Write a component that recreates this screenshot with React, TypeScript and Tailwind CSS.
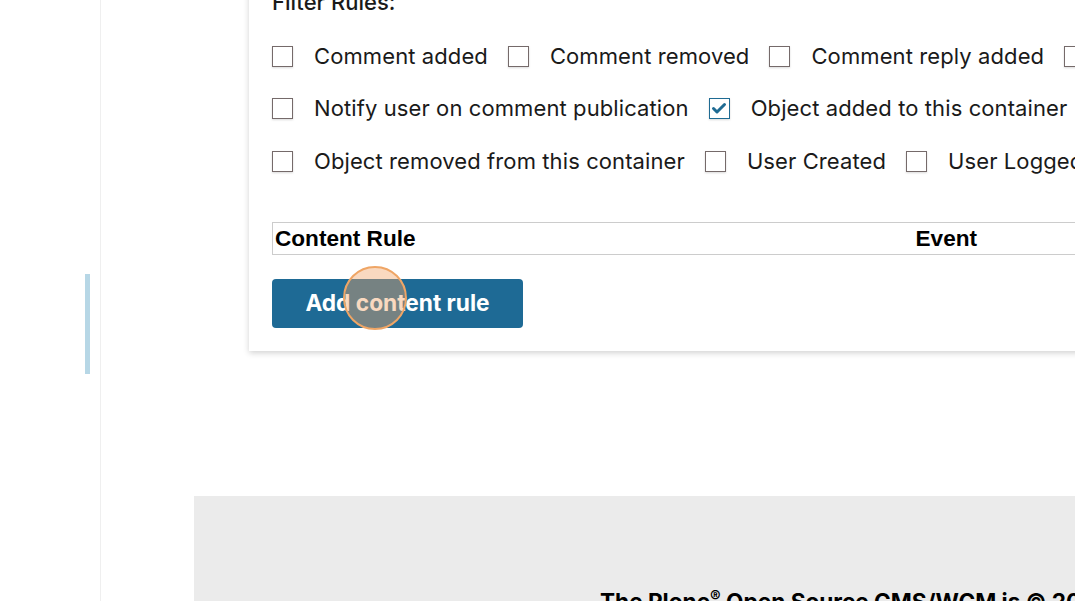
import React from "react";

type Item = { label: string; checked?: boolean };

const rows: Item[][] = [
  [
    { label: "Comment added" },
    { label: "Comment removed" },
    { label: "Comment reply added" },
    { label: "Comment reply removed" },
  ],
  [
    { label: "Notify user on comment publication" },
    { label: "Object added to this container", checked: true },
    { label: "Object copied" },
  ],
  [
    { label: "Object removed from this container" },
    { label: "User Created" },
    { label: "User Logged in" },
    { label: "User Logged out" },
  ],
];

function Box({ checked }: { checked?: boolean }) {
  if (checked) {
    return (
      <span className="flex h-[21px] w-[21px] shrink-0 items-center justify-center border-[1.5px] border-[#1f6b93] bg-white shadow-[0_1px_2px_rgba(0,0,0,0.15)]">
        <svg width="16" height="16" viewBox="0 0 16 16">
          <polyline points="2.5,8.5 6,12 13.5,4.5" fill="none" stroke="#1f6b93" strokeWidth="3" strokeLinecap="round" strokeLinejoin="round" />
        </svg>
      </span>
    );
  }
  return <span className="h-[21px] w-[21px] shrink-0 border-[1.5px] border-[#756a6a] bg-white shadow-[0_1px_2px_rgba(0,0,0,0.15)]" />;
}

export default function App() {
  return (
    <div className="flex h-[601px] w-[1075px] overflow-hidden bg-white font-['Inter',sans-serif] text-[#1a1a1a]">
      <aside className="w-[101px] shrink-0 border-r border-[#efefef] pl-[85px] pt-[274px]">
        <div className="h-[100px] w-[5px] bg-[#b7d7e6]" />
      </aside>
      <main className="flex w-[1500px] shrink-0 flex-col">
        <section className="ml-[148px] -mt-[30px] w-[1100px] bg-white px-[23px] pt-[17px] pb-[23px] shadow-[0_2px_6px_rgba(0,0,0,0.18)]">
          <h2 className="text-[22px] font-medium leading-[30px] text-[#1a1a1a]">Filter Rules:</h2>
          <div className="mt-[24px] flex flex-col">
            {rows.map((row, i) => (
              <div key={i} className={`flex items-center whitespace-nowrap ${i === 1 ? "mt-[22px]" : i === 2 ? "mt-[23px]" : ""}`}>
                {row.map((it, j) => (
                  <label key={j} className="mr-[20px] flex items-center gap-[21px] text-[22px] leading-[30px] tracking-[0.1px]">
                    <Box checked={it.checked} />
                    <span>{it.label}</span>
                  </label>
                ))}
              </div>
            ))}
          </div>
          <table className="mt-[46px] w-[1000px] border-collapse border border-[#cccccc] font-['Liberation_Sans',Arial,sans-serif]">
            <thead>
              <tr>
                <th className="w-[641px] px-[2px] text-left text-[22.6px] font-bold leading-[31px] text-black">Content Rule</th>
                <th className="px-[2px] text-left text-[22.6px] font-bold leading-[31px] text-black">Event</th>
              </tr>
            </thead>
          </table>
          <div className="mt-[24px]">
            <button className="relative h-[49px] w-[251px] rounded-[4px] bg-[#1e6a95] text-[22.7px] font-bold text-white">
              Add content rule
              <span className="absolute left-[71px] top-[-13px] h-[64px] w-[64px] rounded-full border-2 border-[#efa565] bg-[rgba(240,165,105,0.42)]" />
            </button>
          </div>
        </section>
        <footer className="ml-[93px] mt-[145px] h-[400px] bg-[#ebebeb] pl-[406px] pt-[91px]">
          <p className="whitespace-nowrap text-[22.6px] font-bold leading-[30px] text-black">
            The Plone<sup className="text-[16px]">®</sup> Open Source CMS/WCM is © 2000-2024 by the Plone Foundation and friends.
          </p>
        </footer>
      </main>
    </div>
  );
}
